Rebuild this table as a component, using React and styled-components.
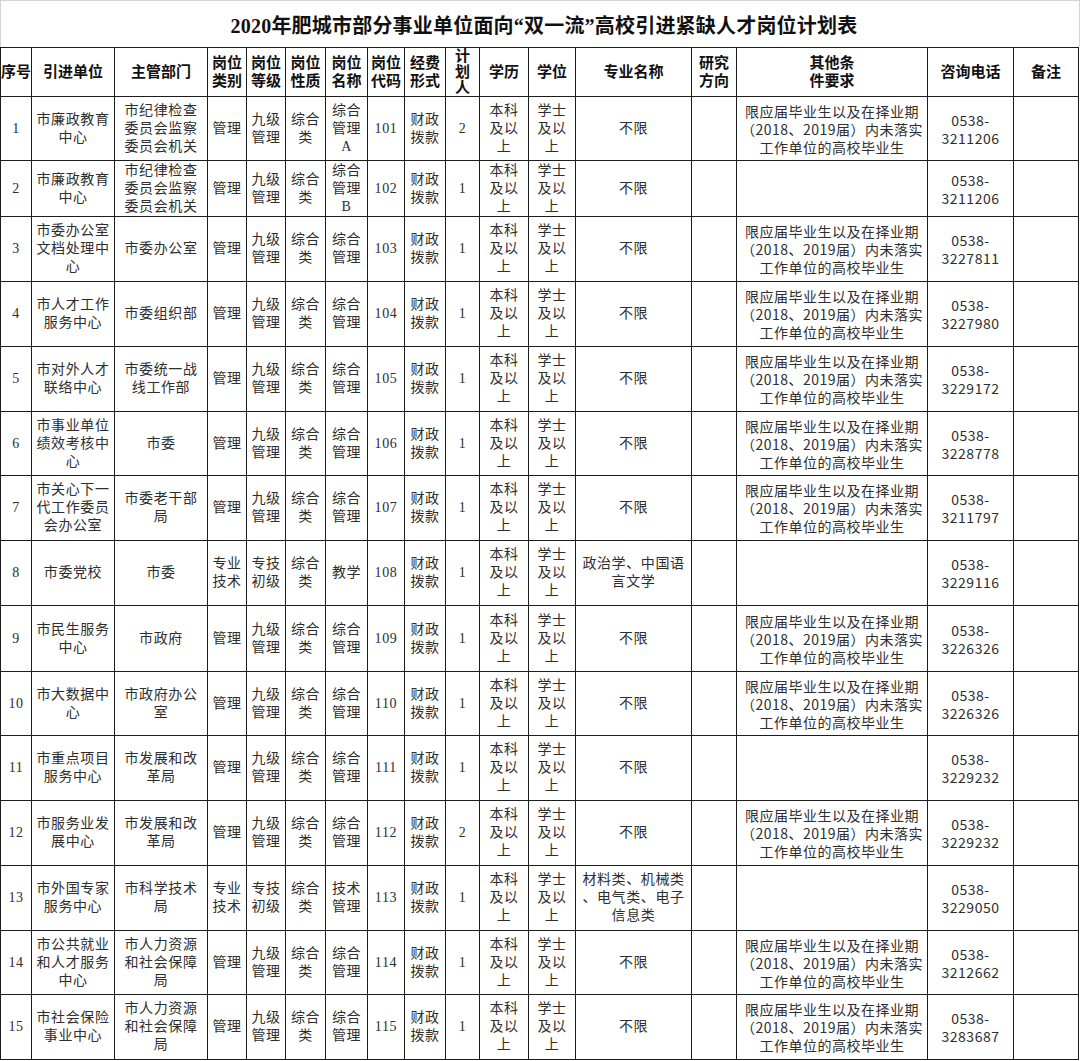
import React from 'react';
import styled, { createGlobalStyle } from 'styled-components';

const Global = createGlobalStyle`
  html, body { margin: 0; padding: 0; background: #fff; }
  body { width: 1080px; height: 1061px; overflow: hidden; }
`;

const Page = styled.div`
  width: 1080px;
  height: 1061px;
  overflow: hidden;
  background: #fff;
`;

const Title = styled.h1`
  margin: 0;
  height: 47px;
  box-sizing: border-box;
  border: 1px solid #d4d4d4;
  border-bottom: none;
  width: 1080px;
  display: flex;
  align-items: center;
  justify-content: center;
  padding-left: 8px;
  font-family: "Liberation Serif", "Noto Sans CJK SC", serif;
  font-weight: 700;
  font-size: 20px;
  color: #111;
  letter-spacing: 0.2px;
`;

const Table = styled.table`
  border-collapse: collapse;
  table-layout: fixed;
  width: 1079px;
`;

const Row = styled.tr`
  height: ${(p) => p.$h}px;
`;

const HeadCell = styled.th`
  border: 1px solid #1c1c1c;
  padding: 0;
  font-family: "Liberation Serif", "Noto Sans CJK SC", serif;
  font-weight: 700;
  font-size: 15px;
  line-height: ${(p) => (p.$tight ? 16 : 18)}px;
  color: #111;
  text-align: center;
  vertical-align: middle;
  white-space: pre;
  overflow: hidden;
`;

const Cell = styled.td`
  border: 1px solid #1c1c1c;
  padding: 0;
  font-family: ${(p) =>
    p.$sans
      ? '"Noto Sans CJK SC", "Liberation Sans", sans-serif'
      : '"Liberation Serif", "Noto Sans CJK SC", serif'};
  font-size: 14px;
  letter-spacing: ${(p) => (p.$sans ? 0.5 : 0.6)}px;
  line-height: 18px;
  color: #2e2e2e;
  text-align: center;
  vertical-align: middle;
  white-space: pre;
  overflow: hidden;
`;

const cols = [31, 83, 93, 39, 39, 40, 42, 37, 41, 34, 49, 47, 116, 45, 191, 86, 65];

const headers = [
  '序号', '引进单位', '主管部门', '岗位\n类别', '岗位\n等级', '岗位\n性质', '岗位\n名称',
  '岗位\n代码', '经费\n形式', '计\n划\n人', '学历', '学位', '专业名称', '研究\n方向',
  '其他条\n件要求', '咨询电话', '备注',
];

const G = '管理';
const J9 = '九级\n管理';
const ZL = '综合\n类';
const ZG = '综合\n管理';
const CZ = '财政\n拨款';
const BK = '本科\n及以\n上';
const XS = '学士\n及以\n上';
const BX = '不限';
const LY = '限应届毕业生以及在择业期\n（2018、2019届）内未落实\n工作单位的高校毕业生';
const ZJ = '专业\n技术';
const ZC = '专技\n初级';

const rows = [
  ['1', '市廉政教育\n中心', '市纪律检查\n委员会监察\n委员会机关', G, J9, ZL, '综合\n管理\nA', '101', CZ, '2', BK, XS, BX, '', LY, '0538-\n3211206', ''],
  ['2', '市廉政教育\n中心', '市纪律检查\n委员会监察\n委员会机关', G, J9, ZL, '综合\n管理\nB', '102', CZ, '1', BK, XS, BX, '', '', '0538-\n3211206', ''],
  ['3', '市委办公室\n文档处理中\n心', '市委办公室', G, J9, ZL, ZG, '103', CZ, '1', BK, XS, BX, '', LY, '0538-\n3227811', ''],
  ['4', '市人才工作\n服务中心', '市委组织部', G, J9, ZL, ZG, '104', CZ, '1', BK, XS, BX, '', LY, '0538-\n3227980', ''],
  ['5', '市对外人才\n联络中心', '市委统一战\n线工作部', G, J9, ZL, ZG, '105', CZ, '1', BK, XS, BX, '', LY, '0538-\n3229172', ''],
  ['6', '市事业单位\n绩效考核中\n心', '市委', G, J9, ZL, ZG, '106', CZ, '1', BK, XS, BX, '', LY, '0538-\n3228778', ''],
  ['7', '市关心下一\n代工作委员\n会办公室', '市委老干部\n局', G, J9, ZL, ZG, '107', CZ, '1', BK, XS, BX, '', LY, '0538-\n3211797', ''],
  ['8', '市委党校', '市委', ZJ, ZC, ZL, '教学', '108', CZ, '1', BK, XS, '政治学、中国语\n言文学', '', '', '0538-\n3229116', ''],
  ['9', '市民生服务\n中心', '市政府', G, J9, ZL, ZG, '109', CZ, '1', BK, XS, BX, '', LY, '0538-\n3226326', ''],
  ['10', '市大数据中\n心', '市政府办公\n室', G, J9, ZL, ZG, '110', CZ, '1', BK, XS, BX, '', LY, '0538-\n3226326', ''],
  ['11', '市重点项目\n服务中心', '市发展和改\n革局', G, J9, ZL, ZG, '111', CZ, '1', BK, XS, BX, '', '', '0538-\n3229232', ''],
  ['12', '市服务业发\n展中心', '市发展和改\n革局', G, J9, ZL, ZG, '112', CZ, '2', BK, XS, BX, '', LY, '0538-\n3229232', ''],
  ['13', '市外国专家\n服务中心', '市科学技术\n局', ZJ, ZC, ZL, '技术\n管理', '113', CZ, '1', BK, XS, '材料类、机械类\n、电气类、电子\n信息类', '', '', '0538-\n3229050', ''],
  ['14', '市公共就业\n和人才服务\n中心', '市人力资源\n和社会保障\n局', G, J9, ZL, ZG, '114', CZ, '1', BK, XS, BX, '', LY, '0538-\n3212662', ''],
  ['15', '市社会保险\n事业中心', '市人力资源\n和社会保障\n局', G, J9, ZL, ZG, '115', CZ, '1', BK, XS, BX, '', LY, '0538-\n3283687', ''],
];

const heights = [64, 56, 65, 65, 65, 64, 65, 65, 66, 64, 65, 65, 65, 64, 65];

export default function App() {
  return (
    <Page>
      <Global />
      <Title>2020年肥城市部分事业单位面向“双一流”高校引进紧缺人才岗位计划表</Title>
      <Table>
        <colgroup>
          {cols.map((w, i) => (
            <col key={i} style={{ width: w }} />
          ))}
        </colgroup>
        <thead>
          <Row $h={49}>
            {headers.map((h, i) => (
              <HeadCell key={i} $tight={i === 9}>{h}</HeadCell>
            ))}
          </Row>
        </thead>
        <tbody>
          {rows.map((r, ri) => (
            <Row key={ri} $h={heights[ri]}>
              {r.map((c, ci) => (
                <Cell key={ci} $sans={ci === 14 || ci === 15}>{c}</Cell>
              ))}
            </Row>
          ))}
        </tbody>
      </Table>
    </Page>
  );
}
